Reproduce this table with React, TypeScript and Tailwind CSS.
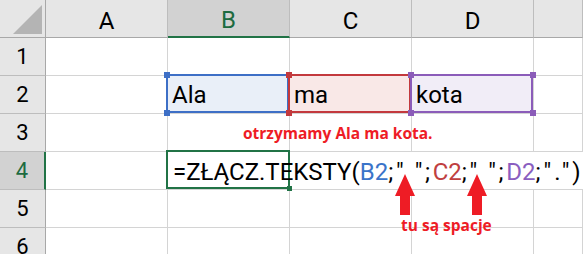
import React from "react";

const gridLine = "border-r border-b border-[#d4d4d4]";

function ColHeader({ label, selected }: { label: string; selected?: boolean }) {
  return (
    <div
      className={
        selected
          ? "flex items-center justify-center pt-1 bg-[#d2d2d2] border-r border-r-[#bdbdbd] border-b-2 border-b-[#217346] text-[#1d6b40]"
          : "flex items-center justify-center pt-1 bg-[#e6e6e6] border-r border-r-[#bdbdbd] border-b border-b-[#a8a8a8] text-black"
      }
    >
      {label}
    </div>
  );
}

function RowHeader({ label, selected }: { label: string; selected?: boolean }) {
  return (
    <div
      className={
        selected
          ? "flex items-center justify-center text-[22px] bg-[#d2d2d2] border-b border-b-[#bdbdbd] border-r-2 border-r-[#217346] text-[#1d6b40]"
          : "flex items-center justify-center text-[22px] bg-[#e6e6e6] border-b border-b-[#bdbdbd] border-r border-r-[#a8a8a8] text-black"
      }
    >
      {label}
    </div>
  );
}

function Corner({ c, pos }: { c: string; pos: string }) {
  return <div className={`absolute w-[6px] h-[6px] ${c} ${pos}`} />;
}

function RangeCell({
  text,
  bg,
  border,
  square,
}: {
  text: string;
  bg: string;
  border: string;
  square: string;
}) {
  return (
    <div className={`relative flex items-center pl-1 ${bg} ${gridLine}`}>
      <div className={`absolute -left-[2px] -top-[2px] right-0 bottom-0 border-2 ${border}`} />
      <Corner c={square} pos="-left-[4px] -top-[4px]" />
      <Corner c={square} pos="-right-[3px] -top-[4px]" />
      <Corner c={square} pos="-left-[4px] -bottom-[3px]" />
      <Corner c={square} pos="-right-[3px] -bottom-[3px]" />
      <span className="relative">{text}</span>
    </div>
  );
}

function Arrow() {
  return (
    <svg width="20" height="41" viewBox="0 0 20 41">
      <polygon points="10,0 20,22 15,22 15,41 5,41 5,22 0,22" fill="#ee1c25" />
    </svg>
  );
}

export default function App() {
  const empty = <div className={gridLine} />;
  return (
    <div className="relative w-[583px] h-[254px] overflow-hidden bg-white font-['Roboto',sans-serif] text-[24px] leading-[28px] text-black">
      <div className="grid grid-cols-[46px_122px_122px_122px_122px_1fr] grid-rows-[38px_38px_38px_38px_38px_38px_38px]">
        {/* header row */}
        <div className="relative bg-[#e6e6e6] border-r border-b border-[#a8a8a8]">
          <svg className="absolute left-[13px] top-[5px]" width="30" height="30" viewBox="0 0 30 30">
            <polygon points="0,29 29,29 29,0" fill="#b4b4b4" />
          </svg>
        </div>
        <ColHeader label="A" />
        <ColHeader label="B" selected />
        <ColHeader label="C" />
        <ColHeader label="D" />
        <ColHeader label="" />

        {/* row 1 */}
        <RowHeader label="1" />
        {empty}
        {empty}
        {empty}
        {empty}
        {empty}

        {/* row 2 */}
        <RowHeader label="2" />
        {empty}
        <RangeCell text="Ala" bg="bg-[#e9eff8]" border="border-[#3d6fc6]" square="bg-[#3d6fc6]" />
        <RangeCell text="ma" bg="bg-[#f9e8e7]" border="border-[#c3393d]" square="bg-[#c3393d]" />
        <RangeCell text="kota" bg="bg-[#f1edf7]" border="border-[#8b5cb9]" square="bg-[#8b5cb9]" />
        {empty}

        {/* row 3 */}
        <RowHeader label="3" />
        {empty}
        {empty}
        {empty}
        {empty}
        {empty}

        {/* row 4 */}
        <RowHeader label="4" selected />
        {empty}
        <div className="relative col-span-4 flex items-center pl-[5px] pt-[3px] border-b border-[#d4d4d4] whitespace-nowrap">
          <div className="absolute -left-[2px] -top-[2px] w-[124px] bottom-0 border-2 border-[#217346]" />
          <div className="absolute left-[119px] -bottom-[2px] w-[5px] h-[5px] bg-[#217346]" />
          <span className="relative">
            =ZŁĄCZ.TEKSTY(<span className="text-[#3a74c9]">B2</span>
            <span className="tracking-[2.6px]">;" ";</span>
            <span className="text-[#c0403f]">C2</span>
            <span className="tracking-[2.6px]">;" ";</span>
            <span className="text-[#8a5ec0]">D2</span>
            <span className="tracking-[3px]">;".")</span>
          </span>
        </div>

        {/* row 5 */}
        <RowHeader label="5" />
        {empty}
        {empty}
        {empty}
        {empty}
        {empty}

        {/* row 6 */}
        <RowHeader label="6" />
        {empty}
        {empty}
        {empty}
        {empty}
        {empty}
      </div>

      {/* annotations */}
      <div className="absolute left-[243px] top-[123px] font-['Open_Sans',sans-serif] font-bold text-[15.5px] leading-[20px] text-[#ee1c25] whitespace-nowrap">
        otrzymamy Ala ma kota.
      </div>
      <div className="absolute left-[395px] top-[174px]">
        <Arrow />
      </div>
      <div className="absolute left-[467px] top-[174px]">
        <Arrow />
      </div>
      <div className="absolute left-[401px] top-[215px] font-['Open_Sans',sans-serif] font-bold text-[15.5px] leading-[20px] text-[#ee1c25] whitespace-nowrap">
        tu są spacje
      </div>
    </div>
  );
}
